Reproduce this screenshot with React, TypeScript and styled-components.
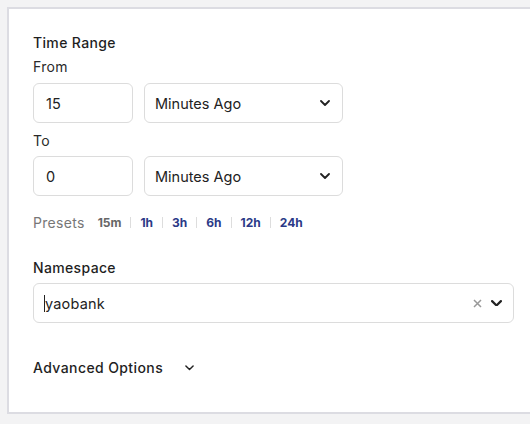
import React from "react";
import styled, { createGlobalStyle } from "styled-components";

const Global = createGlobalStyle`
  html, body { margin: 0; padding: 0; background: #f3f3f4; overflow: hidden; }
  body { font-family: Inter, "Open Sans", sans-serif; color: #222; }
  * { box-sizing: border-box; }
`;

const Page = styled.div`
  padding: 7px 0 0 7px;
  width: 530px;
  overflow: hidden;
`;

const Card = styled.div`
  width: 540px;
  background: #fff;
  border: 2px solid #dcdce2;
  padding: 24px 24px 34px 24px;
  display: flex;
  flex-direction: column;
`;

const Title = styled.div<{ $mt?: number }>`
  font-size: 14px;
  font-weight: 500;
  line-height: 20px;
  letter-spacing: 0.35px;
  color: #1f1f1f;
  margin-top: ${(p) => p.$mt ?? 0}px;
`;

const SubLabel = styled.div<{ $mt: number }>`
  font-size: 14px;
  font-weight: 400;
  line-height: 20px;
  letter-spacing: 0.3px;
  color: #2a2a2a;
  margin-top: ${(p) => p.$mt}px;
`;

const Row = styled.div<{ $mt: number }>`
  display: flex;
  gap: 11px;
  margin-top: ${(p) => p.$mt}px;
`;

const Field = styled.div<{ $w: number }>`
  width: ${(p) => p.$w}px;
  height: 40px;
  border: 1px solid #dcdcdc;
  border-radius: 6px;
  display: flex;
  align-items: center;
  padding: 0 12px;
  font-size: 14.5px;
  color: #222;
  background: #fff;
`;

const SelectBox = styled(Field)`
  padding: 0 12px 0 10px;
  justify-content: space-between;
`;

const Presets = styled.div`
  display: flex;
  align-items: center;
  margin-top: 16px;
  height: 20px;
`;

const PresetLabel = styled.span`
  font-size: 14px;
  color: #777;
  letter-spacing: 0.3px;
  margin-right: 13px;
`;

const Preset = styled.span<{ $active?: boolean }>`
  font-size: 12px;
  font-weight: 700;
  color: ${(p) => (p.$active ? "#666" : "#2b3a87")};
`;

const Sep = styled.span`
  width: 1px;
  height: 11px;
  background: #ddd;
  margin: 0 9px 0 9px;
`;

const NsField = styled(Field)`
  padding: 0 11px 0 10px;
  justify-content: space-between;
`;

const NsValue = styled.span`
  border-left: 1px solid #222;
  line-height: 17px;
  letter-spacing: 0.2px;
`;

const Icons = styled.div`
  display: flex;
  align-items: center;
  gap: 9px;
`;

const Advanced = styled.div`
  display: flex;
  align-items: center;
  gap: 22px;
  margin-top: 35px;
  font-size: 14px;
  font-weight: 500;
  line-height: 20px;
  letter-spacing: 0.4px;
  color: #1f1f1f;
`;

const Chevron = ({ size = 10, sw = 1.8 }: { size?: number; sw?: number }) => (
  <svg width={size} height={size * 0.6} viewBox="0 0 10 6" fill="none">
    <polyline points="1,1 5,5 9,1" stroke="#222" strokeWidth={sw} strokeLinecap="round" strokeLinejoin="round" />
  </svg>
);

const Clear = () => (
  <svg width="9" height="9" viewBox="0 0 9 9">
    <path d="M1 1 L8 8 M8 1 L1 8" stroke="#999" strokeWidth="1.5" />
  </svg>
);

export default function App() {
  return (
    <Page>
      <Global />
      <Card>
        <Title>Time Range</Title>
        <SubLabel $mt={4}>From</SubLabel>
        <Row $mt={6}>
          <Field $w={100}>15</Field>
          <SelectBox $w={199}>
            Minutes Ago
            <Chevron />
          </SelectBox>
        </Row>
        <SubLabel $mt={8}>To</SubLabel>
        <Row $mt={5}>
          <Field $w={100}>0</Field>
          <SelectBox $w={199}>
            Minutes Ago
            <Chevron />
          </SelectBox>
        </Row>
        <Presets>
          <PresetLabel>Presets</PresetLabel>
          <Preset $active>15m</Preset>
          <Sep />
          <Preset>1h</Preset>
          <Sep />
          <Preset>3h</Preset>
          <Sep />
          <Preset>6h</Preset>
          <Sep />
          <Preset>12h</Preset>
          <Sep />
          <Preset>24h</Preset>
        </Presets>
        <Title $mt={26}>Namespace</Title>
        <Row $mt={5}>
          <NsField $w={481}>
            <NsValue>yaobank</NsValue>
            <Icons>
              <Clear />
              <Chevron size={11} sw={2} />
            </Icons>
          </NsField>
        </Row>
        <Advanced>
          Advanced Options
          <Chevron size={9} sw={1.6} />
        </Advanced>
      </Card>
    </Page>
  );
}
